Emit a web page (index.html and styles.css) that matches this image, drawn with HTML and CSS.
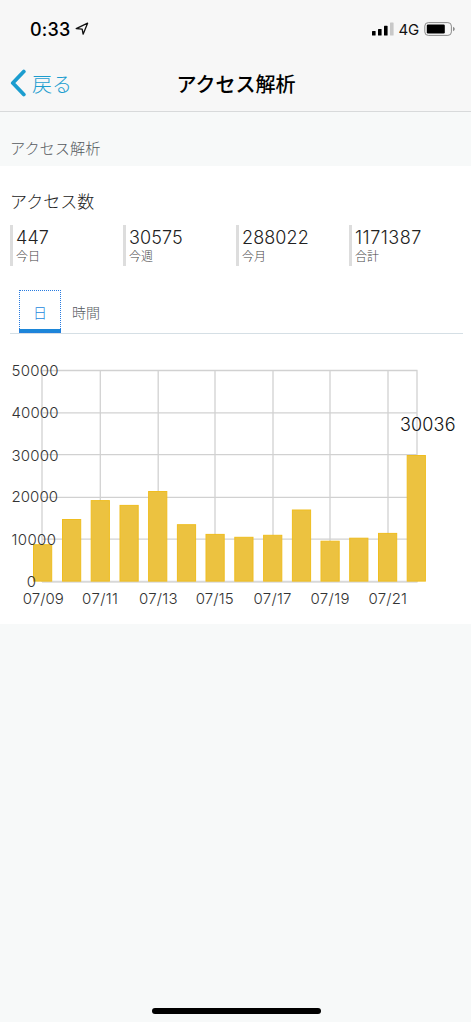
FILE: index.html
```html
<!DOCTYPE html>
<html lang="ja">
<head>
    <meta charset="UTF-8">
    <meta name="viewport" content="width=device-width, initial-scale=1.0">
    <title>アクセス解析</title>
    <link rel="stylesheet" href="styles.css">
</head>
<body>
    <div class="screen">
        <header class="header">
            <div class="status-bar">
                <span class="time">0:33</span>
                <svg class="location" width="14" height="14" viewBox="0 0 14 14">
                    <path d="M1.2 6.6 12.6 1.2 8.1 12.2 7.2 7.2Z"/>
                </svg>
                <div class="status-right">
                    <svg class="signal" width="22" height="14" viewBox="0 0 22 14">
                        <rect x="0" y="9" width="3.6" height="4.5" rx="0.6"/>
                        <rect x="6" y="7" width="3.6" height="6.5" rx="0.6"/>
                        <rect x="12" y="3.8" width="3.6" height="9.7" rx="0.6"/>
                        <rect class="off" x="18" y="0.5" width="3.6" height="13" rx="0.6"/>
                    </svg>
                    <span class="network">4G</span>
                    <svg class="battery" width="32" height="14" viewBox="0 0 32 14">
                        <rect class="outline" x="0.8" y="0.6" width="26.6" height="12.8" rx="3.5"/>
                        <rect x="2.8" y="2.6" width="18" height="8.8" rx="1.2"/>
                        <path class="cap" d="M29 4.8Q30.8 5.6 30.8 7T29 9.2Z"/>
                    </svg>
                </div>
            </div>
            <nav class="nav-bar">
                <a class="back" href="#">
                    <svg width="16" height="28" viewBox="0 0 16 28">
                        <path d="M13.8 2.5 2.8 14 13.8 25.5"/>
                    </svg>
                    <span>戻る</span>
                </a>
                <h1>アクセス解析</h1>
            </nav>
        </header>

        <h2 class="section-title">アクセス解析</h2>

        <main class="panel">
            <h3>アクセス数</h3>
            <div class="stats">
                <div class="stat"><strong>447</strong><small>今日</small></div>
                <div class="stat"><strong>30575</strong><small>今週</small></div>
                <div class="stat"><strong>288022</strong><small>今月</small></div>
                <div class="stat total"><strong>1171387</strong><small>合計</small></div>
            </div>

            <div class="tabs">
                <a class="tab active" href="#">日</a>
                <a class="tab" href="#">時間</a>
            </div>

            <svg class="chart" width="471" height="270" viewBox="0 -10 471 270">
                <!-- Grid -->
                <path class="grid" d="M42 6.5H417.5M42 48.8H417.5M42 90.6H417.5M42 133.4H417.5M42 175.2H417.5M42 6V218M100.3 6V218M158.2 6V218M215 6V218M273 6V218M330 6V218M388 6V218M417 6V218"/>
                <path class="axis" d="M42 217.8H417.5"/>
                <!-- Bars -->
                <g class="bars">
                    <rect x="33.5" y="180.7" width="18.2" height="36.4"/>
                    <rect x="62.5" y="155.5" width="18.2" height="61.6"/>
                    <rect x="91.2" y="136.6" width="18.2" height="80.5"/>
                    <rect x="120" y="141.4" width="18.2" height="75.7"/>
                    <rect x="148.6" y="127.5" width="18.2" height="89.6"/>
                    <rect x="177.4" y="160.7" width="18.2" height="56.4"/>
                    <rect x="206" y="170.4" width="18.2" height="46.7"/>
                    <rect x="234.8" y="173.3" width="18.2" height="43.8"/>
                    <rect x="263.6" y="171.3" width="18.2" height="45.8"/>
                    <rect x="292.4" y="146" width="18.2" height="71.1"/>
                    <rect x="321" y="177.2" width="18.2" height="39.9"/>
                    <rect x="349.7" y="174.2" width="18.2" height="42.9"/>
                    <rect x="378.5" y="169.4" width="18.2" height="47.7"/>
                    <rect x="407.2" y="91.5" width="18.2" height="125.6"/>
                </g>
                <!-- Labels -->
                <g class="labels">
                    <text x="11.5" y="12" textLength="47">50000</text>
                    <text x="11.5" y="53.7" textLength="47">40000</text>
                    <text x="11.5" y="96.5" textLength="47">30000</text>
                    <text x="11.5" y="138" textLength="46.5">20000</text>
                    <text x="11.5" y="181" textLength="44.5">10000</text>
                    <text x="26.7" y="222.5">0</text>
                    <text x="22.7" y="240.4" textLength="41">07/09</text>
                    <text x="82" y="240.4" textLength="36">07/11</text>
                    <text x="139" y="240.4" textLength="38.5">07/13</text>
                    <text x="195.7" y="240.4" textLength="38">07/15</text>
                    <text x="253.5" y="240.4" textLength="38">07/17</text>
                    <text x="310.5" y="240.4" textLength="39">07/19</text>
                    <text x="368.5" y="240.4" textLength="38.5">07/21</text>
                </g>
                <text class="value" x="400" y="67.4" textLength="55.5">30036</text>
            </svg>
        </main>

        <div class="home-indicator"></div>
    </div>
</body>
</html>
```
FILE: styles.css
```css
body {
    margin: 0;
    background-color: #ffffff;
    font-family: Inter, "Noto Sans CJK JP", sans-serif;
    color: #222;
}

a {
    text-decoration: none;
}

.screen {
    display: flex;
    flex-direction: column;
    box-sizing: border-box;
    width: 471px;
    height: 1022px;
    background-color: #f7f9f9;
}

/* Header */
.header {
    box-sizing: border-box;
    height: 112px;
    background-color: #f7f7f7;
    border-bottom: 1px solid #d8dadb;
}

.status-bar {
    display: flex;
    align-items: center;
    height: 58px;
    padding: 0 15px 0 30px;
}

.time {
    font-size: 18px;
    font-weight: 500;
    letter-spacing: 0.2px;
    color: #000;
}

.location {
    margin-left: 5px;
    fill: none;
    stroke: #111;
    stroke-width: 1.3;
    stroke-linejoin: round;
}

.status-right {
    display: flex;
    align-items: center;
    margin-left: auto;
}

.signal .off {
    fill: #c8c8c8;
}

.network {
    margin: 0 5px;
    font-size: 15px;
    letter-spacing: -0.2px;
    color: #111;
}

.battery .outline {
    fill: none;
    stroke: #8a8a8a;
}

.battery .cap {
    fill: #8a8a8a;
}

.nav-bar {
    display: grid;
    grid-template-columns: 1fr auto 1fr;
    align-items: center;
    height: 50px;
    padding-left: 10px;
    padding-right: 9px;
}

.nav-bar h1 {
    margin: 0;
    font-size: 20px;
    font-weight: 500;
    color: #000;
}

.back {
    display: flex;
    align-items: center;
    gap: 6px;
    font-size: 20px;
    font-weight: 300;
    color: #1c9dcf;
}

.back path {
    fill: none;
    stroke: #1c9dcf;
    stroke-width: 3.8;
    stroke-linecap: round;
    stroke-linejoin: round;
}

.section-title {
    box-sizing: border-box;
    height: 54px;
    margin: 0;
    padding: 25px 10px 0;
    font-size: 15.2px;
    font-weight: 300;
    line-height: 24px;
    color: #555a5e;
}

/* Panel */
.panel {
    height: 458px;
    background-color: #ffffff;
}

.panel h3 {
    margin: 0;
    padding: 23px 10px 0;
    font-size: 17px;
    font-weight: 300;
    line-height: 26px;
}

.stats {
    display: grid;
    grid-template-columns: repeat(4, 113px);
    margin: 10px 0 0 10px;
}

.stat {
    display: flex;
    flex-direction: column;
    box-sizing: border-box;
    height: 41px;
    padding-top: 1px;
    padding-left: 3px;
    border-left: 3px solid #ddd;
}

.stat strong {
    font-size: 18px;
    font-weight: 300;
    line-height: 23px;
    letter-spacing: 0.1px;
}

.stat.total strong {
    letter-spacing: 0.5px;
}

.stat small {
    font-size: 12px;
    font-weight: 300;
    line-height: 16px;
    color: #444;
}

/* Tabs */
.tabs {
    display: flex;
    margin: 24px 8px 0 10px;
    padding-left: 9px;
    border-bottom: 1px solid #d5dfe5;
}

.tab {
    box-sizing: border-box;
    height: 43px;
    padding: 0 11px;
    font-size: 14px;
    font-weight: 300;
    line-height: 45px;
    color: #555a5e;
}

.tab.active {
    width: 42px;
    padding: 0 14px;
    border-bottom: 4px solid #1c86d8;
    outline: 1px dotted #287be0;
    outline-offset: -1px;
    color: #2388dd;
}

/* Chart */
.chart {
    display: block;
    margin-top: 20px;
}

.grid {
    fill: none;
    stroke: #000;
    stroke-opacity: 0.18;
    stroke-width: 1.3;
}

.axis {
    stroke: #d8d8d8;
    stroke-width: 2;
}

.bars rect {
    fill: #ecc240;
    stroke: #efbd20;
    stroke-width: 1;
}

.labels text {
    font-size: 15px;
    font-weight: 300;
    fill: #333;
}

.chart .value {
    font-size: 18px;
    font-weight: 300;
    fill: #111;
}

.home-indicator {
    align-self: center;
    width: 169px;
    height: 6px;
    margin-top: auto;
    margin-bottom: 8px;
    margin-left: 2px;
    border-radius: 3px;
    background-color: #000;
}
```
